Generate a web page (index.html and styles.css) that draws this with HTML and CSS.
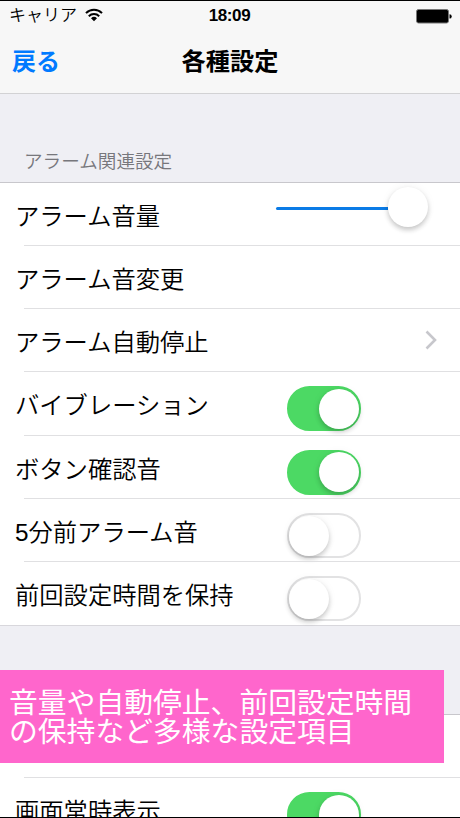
FILE: index.html
```
<!DOCTYPE html>
<html lang="ja">
<head>
    <meta charset="UTF-8">
    <meta name="viewport" content="width=device-width, initial-scale=1.0">
    <title>各種設定</title>
    <link rel="stylesheet" href="styles.css">
</head>
<body>
    <div class="screen">
        <header>
            <div class="status-bar">
                <div class="carrier">
                    <span>キャリア</span>
                    <svg class="wifi" viewBox="0 0 18 14" width="18" height="14">
                        <path d="M1 5.1a11.3 11.3 0 0 1 16 0M3.8 8.2a7.4 7.4 0 0 1 10.4 0" fill="none" stroke="#000" stroke-width="2"/>
                        <path d="M6 10.3a4.3 4.3 0 0 1 6 0L9 13.3z"/>
                    </svg>
                </div>
                <div class="time">18:09</div>
                <svg class="battery" viewBox="0 0 36 15" width="36" height="15">
                    <rect x="0.5" y="0.5" width="32" height="13.5" rx="2" fill="#000" stroke="#777"/>
                    <path d="M33.5 5.2a2 2 0 0 1 0 4.4z"/>
                </svg>
            </div>
            <div class="nav-bar">
                <a class="back">戻る</a>
                <h1>各種設定</h1>
            </div>
        </header>
        <main>
            <h2>アラーム関連設定</h2>
            <ul class="settings">
                <li>
                    <span class="label">アラーム音量</span>
                    <div class="slider"><div class="track"></div><div class="knob"></div></div>
                </li>
                <li><span class="label">アラーム音変更</span></li>
                <li>
                    <span class="label">アラーム自動停止</span>
                    <svg class="chevron" viewBox="0 0 12 20" width="12" height="20">
                        <path d="M1.5 1.5L10 10l-8.5 8.5" fill="none" stroke="#c7c7cc" stroke-width="2.6"/>
                    </svg>
                </li>
                <li>
                    <span class="label">バイブレーション</span>
                    <div class="switch on"><div class="knob"></div></div>
                </li>
                <li>
                    <span class="label">ボタン確認音</span>
                    <div class="switch on"><div class="knob"></div></div>
                </li>
                <li>
                    <span class="label">5分前アラーム音</span>
                    <div class="switch"><div class="knob"></div></div>
                </li>
                <li>
                    <span class="label">前回設定時間を保持</span>
                    <div class="switch"><div class="knob"></div></div>
                </li>
            </ul>
            <ul class="settings second">
                <li></li>
                <li>
                    <span class="label">画面常時表示</span>
                    <div class="switch on"><div class="knob"></div></div>
                </li>
            </ul>
        </main>
        <div class="caption">音量や自動停止、前回設定時間<br>の保持など多様な設定項目</div>
    </div>
</body>
</html>
```
FILE: styles.css
```
* {
    box-sizing: border-box;
}
body {
    margin: 0;
    font-family: "Liberation Sans", "Noto Sans CJK JP", sans-serif;
    color: #000;
}
.screen {
    position: relative;
    width: 460px;
    height: 818px;
    overflow: hidden;
    background-color: #efeff4;
    border-top: 1px solid #000;
    border-bottom: 1px solid #000;
}
header {
    height: 93px;
    background-color: #f7f7f7;
    border-bottom: 1px solid #d2d2d4;
}
.status-bar {
    display: grid;
    grid-template-columns: 1fr auto 1fr;
    align-items: center;
    height: 30px;
    padding: 0 8px 0 9px;
}
.carrier {
    display: flex;
    align-items: center;
    gap: 8px;
    font-size: 17px;
    font-weight: 350;
    line-height: 30px;
}
.wifi {
    margin-top: -2px;
}
.time {
    padding-right: 2px;
    font-size: 17px;
    font-weight: bold;
    letter-spacing: -0.4px;
}
.battery {
    justify-self: end;
}
.nav-bar {
    display: grid;
    grid-template-columns: 1fr auto 1fr;
    align-items: center;
    height: 56px;
    padding: 0 12px;
}
.back {
    color: #007aff;
    font-size: 24px;
    font-weight: bold;
}
h1 {
    margin: 0;
    font-size: 24.2px;
    font-weight: bold;
}
h2 {
    height: 88px;
    margin: 0;
    padding: 54px 0 0 24px;
    font-size: 18.6px;
    font-weight: 350;
    line-height: 28px;
    color: #77777c;
}
.settings {
    margin: 0;
    padding: 0;
    list-style: none;
    background-color: #fff;
    border-top: 1px solid #c8c7cc;
    border-bottom: 1px solid #d8d7dc;
}
.settings li {
    position: relative;
    display: flex;
    height: 63.17px;
    padding-left: 15px;
}
.settings li + li::before {
    content: "";
    position: absolute;
    top: -1px;
    left: 24px;
    right: 0;
    height: 1px;
    background-color: #e0e0e2;
}
.second {
    margin-top: 88px;
}
.label {
    width: 272px;
    font-size: 24.3px;
    font-weight: 350;
    line-height: 67px;
    white-space: nowrap;
}
.knob {
    width: 40px;
    height: 40px;
    border-radius: 50%;
    background-color: #fff;
    box-shadow: 0 3px 5px rgba(0, 0, 0, 0.2), 0 0 10px rgba(0, 0, 0, 0.05);
}
.slider {
    display: flex;
    align-items: center;
    height: 40px;
    margin: 4px 0 0 -11px;
}
.track {
    width: 112px;
    height: 3px;
    margin-top: 2px;
    border-radius: 2px 0 0 2px;
    background-color: #0a7be6;
}
.switch {
    display: flex;
    align-items: center;
    width: 74px;
    height: 45px;
    margin-top: 14px;
    padding: 2px 0 0;
    border: 2px solid #e2e2e3;
    border-radius: 23px;
}
.switch.on {
    justify-content: flex-end;
    padding: 0;
    background-color: #4cd964;
    border-color: #4cd964;
}
.chevron {
    margin: 21px 0 0 138px;
}
.caption {
    position: absolute;
    top: 669px;
    left: 0;
    width: 444px;
    height: 93px;
    padding: 19px 0 0 9px;
    background-color: #ff66cc;
    color: #fff;
    font-size: 28.8px;
    line-height: 28.7px;
    white-space: nowrap;
}
```
